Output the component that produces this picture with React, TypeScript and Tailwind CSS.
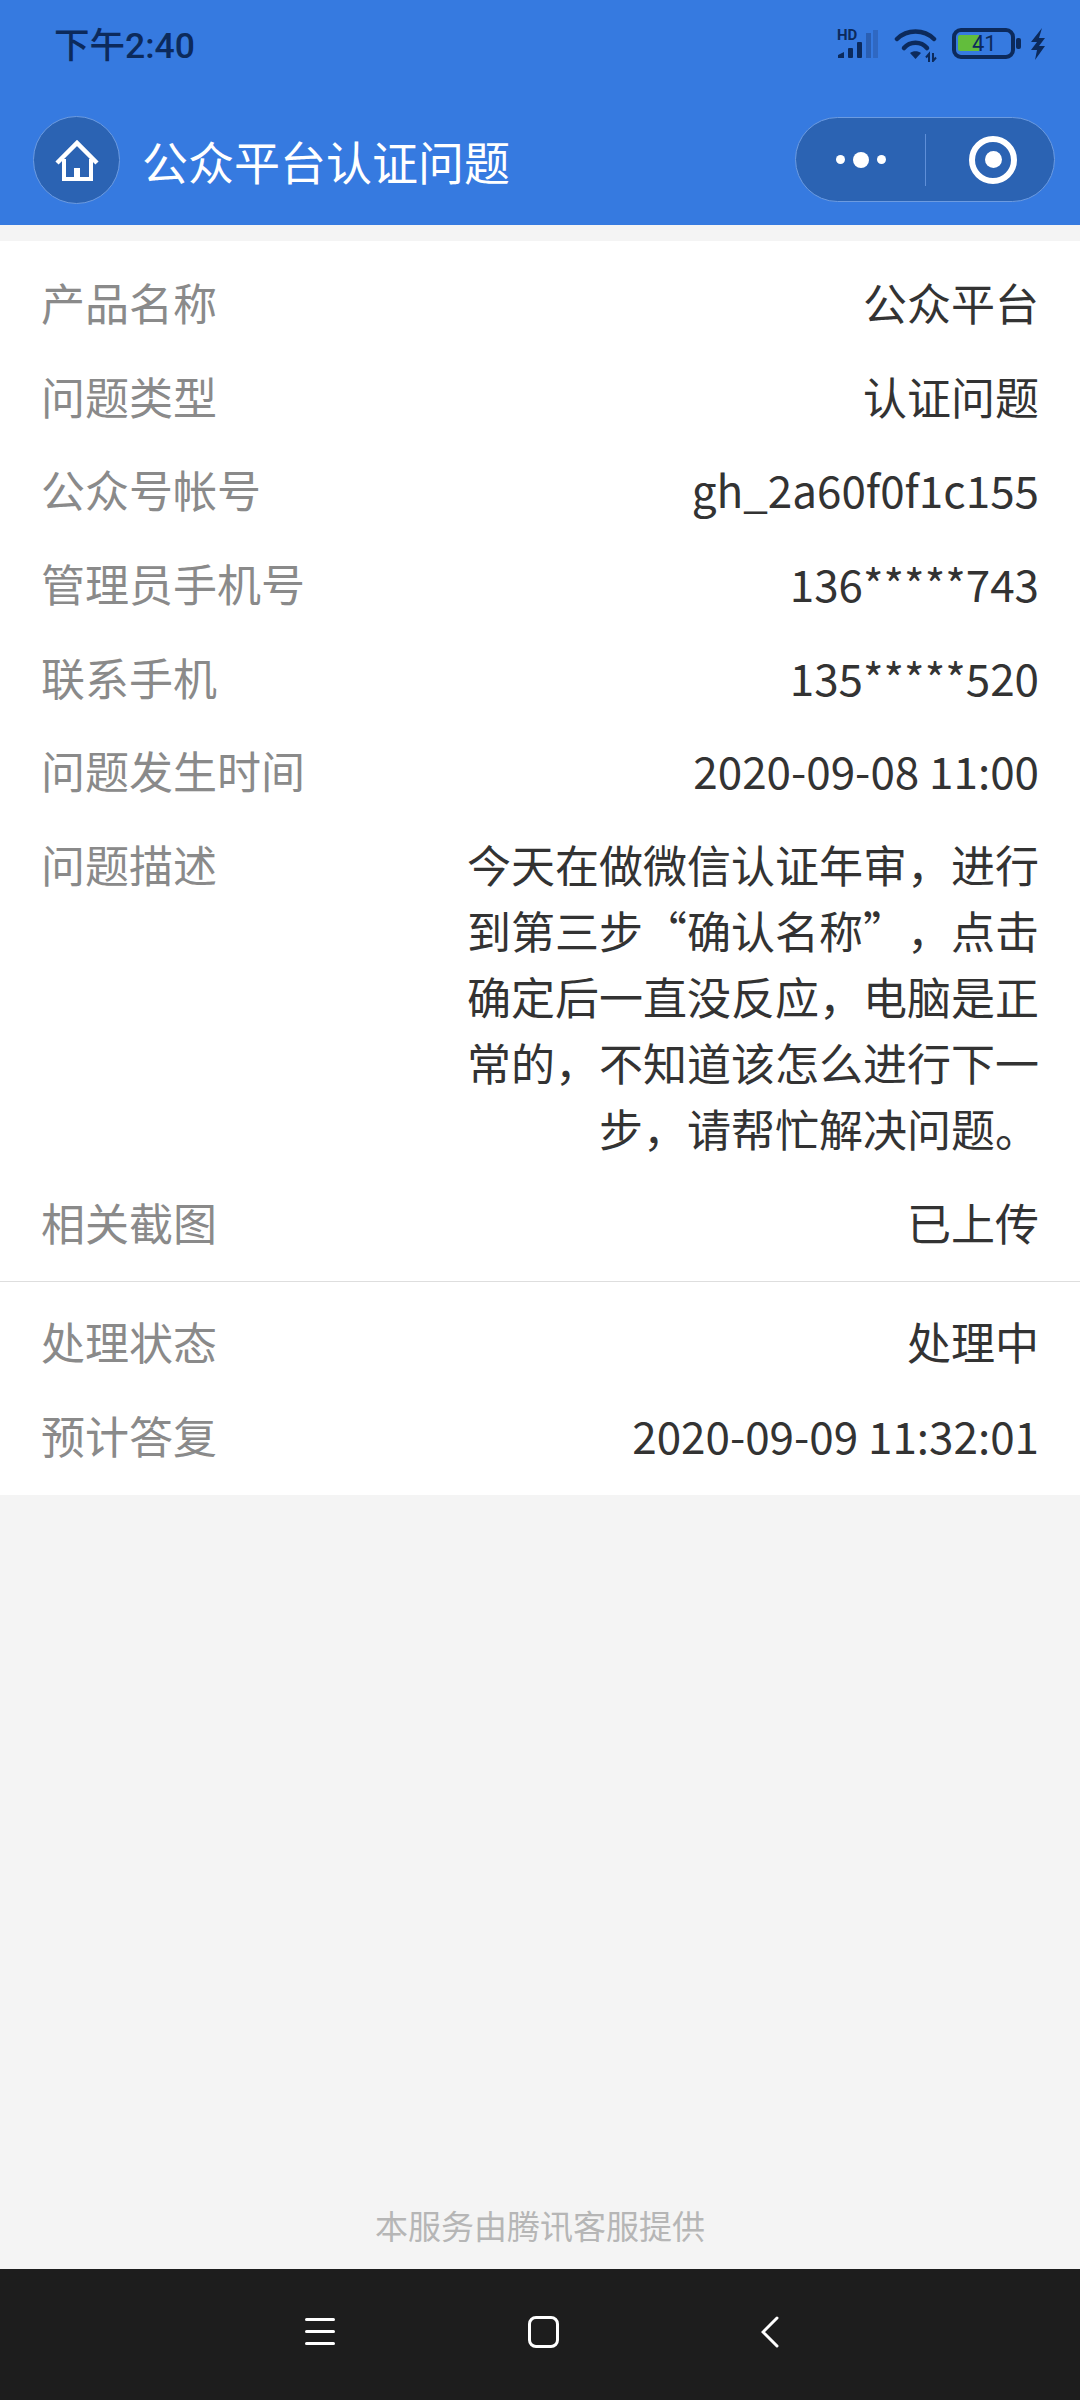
const font = { fontFamily: '"Noto Sans CJK SC", "Noto Sans", sans-serif' };

function Row({ label, value }: { label: string; value: string }) {
  return (
    <div className="flex justify-between items-start py-[13.85px] text-[44px] leading-[66px]">
      <div className="text-[#8a8a8a] shrink-0">{label}</div>
      <div className="text-[#333333] text-right w-[574px] [text-spacing-trim:space-all]">{value}</div>
    </div>
  );
}

function StatusBar() {
  return (
    <div className="h-[90px] flex items-start pl-[54px] pt-[22px]">
      <div className="w-[782px] text-[35.5px] leading-[48px] font-medium text-[#0c2a5c]" style={{ fontFamily: 'Roboto, "Noto Sans CJK SC", sans-serif' }}>下午2:40</div>
      <div className="flex items-start mt-[2px]">
        <svg width="42" height="38" viewBox="0 -4 42 38">
          <text x="1" y="12" fontSize="15" fontWeight="700" fill="#0c2a5c" fontFamily="Roboto, sans-serif">HD</text>
          <path d="M2 30v-3l6-3v6z" fill="#0c2a5c" />
          <rect x="12" y="20" width="5" height="10" rx="1" fill="#0c2a5c" />
          <rect x="21" y="14" width="5" height="16" rx="1" fill="#0c2a5c" />
          <rect x="30" y="5" width="5" height="25" fill="#2a5fb3" />
          <rect x="37" y="2" width="5" height="28" fill="#2f68c2" />
        </svg>
        <svg width="44" height="38" viewBox="0 -4 44 38" fill="none" className="ml-[16px]">
          <path d="M3 11C13 1 30 1 40 11" stroke="#0c2a5c" strokeWidth="4.500" strokeLinecap="round" />
          <path d="M10 20C16 13 27 13 33 20" stroke="#0c2a5c" strokeWidth="4.500" strokeLinecap="round" />
          <path d="M16 25C19 22.500 24 22.500 27 25L21.500 31z" fill="#0c2a5c" />
          <path d="M35 34V26l-3 3.500M39 25v8l3-3.500" stroke="#0c2a5c" strokeWidth="2" />
        </svg>
        <svg width="70" height="38" viewBox="0 -4 70 38" fill="none" className="ml-[14px]">
          <rect x="2" y="2" width="59" height="27" rx="7" stroke="#0c2a5c" strokeWidth="4" />
          <path d="M6 9a2 2 0 0 1 2-2h19v16H8a2 2 0 0 1-2-2z" fill="#62bd3c" />
          <rect x="64" y="10" width="5" height="11" rx="2" fill="#0c2a5c" />
          <text x="20" y="23" fontSize="22" fill="#0c2a5c" fontFamily="Roboto, sans-serif">41</text>
        </svg>
        <svg width="18" height="38" viewBox="0 -4 18 38" className="ml-[7px]">
          <path d="M13 0L2 14h6L2 22h6L6 32l10-14h-6l6-8h-6z" fill="#0c2a5c" />
        </svg>
      </div>
    </div>
  );
}

function NavBar() {
  return (
    <div className="h-[135px] flex items-start justify-between pl-[33px] pr-[25px] pt-[26px]">
      <div className="flex items-start">
        <div className="w-[87px] h-[88px] rounded-full bg-[#2b63b3] border border-[#6c9be0] flex items-center justify-center">
          <svg width="48" height="44" viewBox="0 0 48 44" fill="none" stroke="#fff" strokeWidth="4">
            <path d="M4 25L24 5l20 20" strokeWidth="4.500" />
            <path d="M11 21v20h27V21" />
            <rect x="21" y="30" width="6" height="11" fill="#fff" stroke="none" />
          </svg>
        </div>
        <div className="ml-[22px] text-[46px] leading-[88px] text-white">公众平台认证问题</div>
      </div>
      <div className="w-[260px] h-[85px] mt-[1px] rounded-full bg-[#2b63b3] border border-[#6c9be0] flex items-center">
        <div className="w-[129px] flex items-center justify-center gap-[8px]">
          <div className="w-[9px] h-[9px] rounded-full bg-white" />
          <div className="w-[16px] h-[16px] rounded-full bg-white" />
          <div className="w-[9px] h-[9px] rounded-full bg-white" />
        </div>
        <div className="w-px h-[52px] bg-[#5f8fd8]" />
        <div className="flex-1 flex items-center justify-center pl-[6px]">
          <div className="w-[48px] h-[48px] rounded-full border-[6px] border-white flex items-center justify-center">
            <div className="w-[17px] h-[17px] rounded-full bg-white" />
          </div>
        </div>
      </div>
    </div>
  );
}

export default function App() {
  return (
    <div className="w-[1080px] h-[2400px] flex flex-col bg-[#f4f4f4]" style={font}>
      <div className="bg-[#367ae0]">
        <StatusBar />
        <NavBar />
      </div>
      <div className="mt-[16px] bg-white h-[1254px] flex flex-col px-[41px]">
        <div className="pt-[14px]">
          <Row label="产品名称" value="公众平台" />
          <Row label="问题类型" value="认证问题" />
          <Row label="公众号帐号" value="gh_2a60f0f1c155" />
          <Row label="管理员手机号" value="136*****743" />
          <Row label="联系手机" value="135*****520" />
          <Row label="问题发生时间" value="2020-09-08 11:00" />
          <Row label="问题描述" value="今天在做微信认证年审，进行到第三步“确认名称”，点击确定后一直没反应，电脑是正常的，不知道该怎么进行下一步，请帮忙解决问题。" />
          <Row label="相关截图" value="已上传" />
        </div>
        <div className="h-px bg-[#dedede] -mx-[41px] mt-[12px] mb-[13px]" />
        <Row label="处理状态" value="处理中" />
        <Row label="预计答复" value="2020-09-09 11:32:01" />
      </div>
      <div className="flex-1 flex items-end justify-center pb-[19px]">
        <div className="text-[33px] leading-[50px] text-[#b6b6b6]">本服务由腾讯客服提供</div>
      </div>
      <div className="h-[131px] bg-[#1d1d1d] flex items-start pt-[47px] pl-[305px]">
        <div className="w-[30px] mt-[2px] flex flex-col gap-[9px]">
          <div className="h-[3px] bg-white rounded-full" />
          <div className="h-[3px] bg-white rounded-full" />
          <div className="h-[3px] bg-white rounded-full" />
        </div>
        <div className="ml-[193px] w-[31px] h-[32px] rounded-[8px] border-[3px] border-white" />
        <svg width="18" height="32" viewBox="0 0 18 32" fill="none" stroke="#fff" strokeWidth="3" strokeLinecap="round" className="ml-[202px]">
          <path d="M16 2L2 16l14 14" />
        </svg>
      </div>
    </div>
  );
}
